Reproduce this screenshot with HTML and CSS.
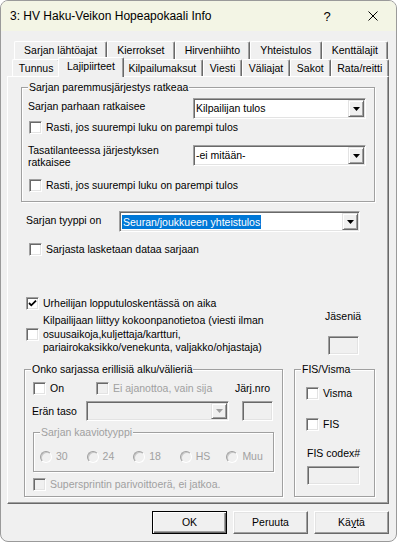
FILE: index.html
```html
<!DOCTYPE html>
<html lang="fi">
<head>
    <meta charset="UTF-8">
    <title>3: HV Haku-Veikon Hopeapokaali Info</title>
    <link rel="stylesheet" href="styles.css">
</head>
<body>
<div class="window">
    <div class="titlebar">
        <span class="title">3: HV Haku-Veikon Hopeapokaali Info</span>
        <span class="tb-btn help">?</span>
        <span class="tb-btn">
            <svg width="10" height="10" viewBox="0 0 10 10"><path d="M0.5 0.5 L9.5 9.5 M9.5 0.5 L0.5 9.5" stroke="#000" stroke-width="1" fill="none"/></svg>
        </span>
    </div>

    <div class="client">
        <!-- välilehdet -->
        <div class="tab-row back">
            <div class="tab">Sarjan lähtöajat</div>
            <div class="tab">Kierrokset</div>
            <div class="tab">Hirvenhiihto</div>
            <div class="tab">Yhteistulos</div>
            <div class="tab">Kenttälajit</div>
        </div>
        <div class="tab-row front">
            <div class="tab">Tunnus</div>
            <div class="tab active">Lajipiirteet</div>
            <div class="tab">Kilpailumaksut</div>
            <div class="tab">Viesti</div>
            <div class="tab">Väliajat</div>
            <div class="tab">Sakot</div>
            <div class="tab">Rata/reitti</div>
        </div>

        <div class="panel">
            <fieldset class="group g-rank">
                <legend>Sarjan paremmusjärjestys ratkeaa</legend>
                <div class="row r1">
                    <span class="lbl">Sarjan parhaan ratkaisee</span>
                    <div class="combo w-rank">
                        <span class="combo-text">Kilpailijan tulos</span>
                        <span class="combo-btn"><svg width="7" height="4" viewBox="0 0 7 4"><path d="M0 0 H7 L3.5 4 Z" fill="#000"/></svg></span>
                    </div>
                </div>
                <div class="check c-rank1"><span class="box"></span><span>Rasti, jos suurempi luku on parempi tulos</span></div>
                <div class="row r2">
                    <span class="lbl two">Tasatilanteessa järjestyksen<br>ratkaisee</span>
                    <div class="combo w-rank">
                        <span class="combo-text">-ei mitään-</span>
                        <span class="combo-btn"><svg width="7" height="4" viewBox="0 0 7 4"><path d="M0 0 H7 L3.5 4 Z" fill="#000"/></svg></span>
                    </div>
                </div>
                <div class="check c-rank2"><span class="box"></span><span>Rasti, jos suurempi luku on parempi tulos</span></div>
            </fieldset>

            <div class="row r-type">
                <span class="lbl">Sarjan tyyppi on</span>
                <div class="combo w-type">
                    <span class="combo-text"><span class="sel">Seuran/joukkueen yhteistulos</span></span>
                    <span class="combo-btn"><svg width="7" height="4" viewBox="0 0 7 4"><path d="M0 0 H7 L3.5 4 Z" fill="#000"/></svg></span>
                </div>
            </div>
            <div class="check c-data"><span class="box"></span><span>Sarjasta lasketaan dataa sarjaan</span></div>

            <div class="check c-time">
                <span class="box"><svg width="11" height="11" viewBox="0 0 11 11"><path d="M2 5 L4.3 7.3 L9 2.6" stroke="#000" stroke-width="1.8" fill="none"/></svg></span>
                <span>Urheilijan lopputuloskentässä on aika</span>
            </div>

            <div class="row r-team">
                <div class="check multi">
                    <span class="box"></span>
                    <span>Kilpailijaan liittyy kokoonpanotietoa (viesti ilman<br>osuusaikoja,kuljettaja/kartturi,<br>pariairokaksikko/venekunta, valjakko/ohjastaja)</span>
                </div>
                <div class="members">
                    <span>Jäseniä</span>
                    <span class="textbox w-members"></span>
                </div>
            </div>

            <div class="row r-bottom">
                <fieldset class="group g-heats">
                    <legend>Onko sarjassa erillisiä alku/välieriä</legend>
                    <div class="row r-on">
                        <div class="check c-on"><span class="box"></span><span>On</span></div>
                        <div class="check c-notime disabled"><span class="box"></span><span>Ei ajanottoa, vain sija</span></div>
                        <span>Järj.nro</span>
                    </div>
                    <div class="row r-level">
                        <span class="lbl">Erän taso</span>
                        <div class="combo w-level disabled">
                            <span class="combo-text"></span>
                            <span class="combo-btn"><svg width="7" height="4" viewBox="0 0 7 4"><path d="M0 0 H7 L3.5 4 Z" fill="#a0a0a0"/></svg></span>
                        </div>
                        <span class="textbox w-order"></span>
                    </div>
                    <fieldset class="group g-chart disabled">
                        <legend>Sarjan kaaviotyyppi</legend>
                        <div class="radios">
                            <div class="radio"><span class="dot"></span><span>30</span></div>
                            <div class="radio"><span class="dot"></span><span>24</span></div>
                            <div class="radio"><span class="dot"></span><span>18</span></div>
                            <div class="radio"><span class="dot"></span><span>HS</span></div>
                            <div class="radio"><span class="dot"></span><span>Muu</span></div>
                        </div>
                    </fieldset>
                    <div class="check c-sprint disabled"><span class="box"></span><span>Supersprintin parivoittoerä, ei jatkoa.</span></div>
                </fieldset>

                <fieldset class="group g-fis">
                    <legend>FIS/Visma</legend>
                    <div class="check c-visma"><span class="box"></span><span>Visma</span></div>
                    <div class="check c-fis"><span class="box"></span><span>FIS</span></div>
                    <div class="codex-lbl">FIS codex#</div>
                    <span class="textbox w-codex"></span>
                </fieldset>
            </div>
        </div>

        <div class="buttons">
            <div class="btn default">OK</div>
            <div class="btn">Peruuta</div>
            <div class="btn">Kä<u>y</u>tä</div>
        </div>
    </div>
</div>
</body>
</html>
```

FILE: styles.css
```css
* {
    box-sizing: border-box;
}

body {
    margin: 0;
    background: #ffffff;
    font-family: "Liberation Sans", Arial, sans-serif;
    font-size: 10.5px;
    line-height: 13px;
    color: #000;
}

.window {
    width: 397px;
    height: 542px;
    border: 1px solid #9a9a9a;
    border-radius: 8px;
    overflow: hidden;
    background: #f0f0f0;
}

/* Otsikkopalkki */
.titlebar {
    display: flex;
    align-items: center;
    height: 30px;
    background: #f3f5e5;
}

.title {
    flex: 1;
    padding-left: 9px;
    font-size: 12px;
}

.tb-btn {
    width: 46px;
    height: 30px;
    display: flex;
    align-items: center;
    justify-content: center;
}

.tb-btn.help {
    font-size: 13px;
}

.client {
    padding: 10px 7px 0 6px;
}

/* Välilehdet */
.tab-row {
    display: flex;
}

.tab-row.back {
    margin: 0 1px 0 7px;
}

.tab-row.front {
    margin: 0 0 0 5px;
}

.tab {
    flex: 1 1 auto;
    height: 18px;
    padding: 0 4px;
    display: flex;
    align-items: center;
    justify-content: center;
    white-space: nowrap;
    background: #f0f0f0;
    border-top: 1px solid #fff;
    border-left: 1px solid #fff;
    border-right: 1px solid #696969;
    box-shadow: inset -1px 0 0 #a0a0a0;
    border-radius: 2px 2px 0 0;
}

.front .tab {
    height: 17px;
}

.front .tab.active {
    position: relative;
    z-index: 1;
    height: 20px;
    margin: -2px -2px -1px;
    padding: 0 6px 2px;
}

.panel {
    height: 428px;
    border: 1px solid;
    border-color: #fff #696969 #696969 #fff;
    box-shadow: inset -1px -1px 0 #a0a0a0;
    padding: 0 13px;
    display: flex;
    flex-direction: column;
    align-items: flex-start;
}

/* Ryhmät */
.group {
    margin: 0;
    padding: 0;
    min-width: 0;
    border: 1px solid #a0a0a0;
    box-shadow: 1px 1px 0 #fff, inset 1px 1px 0 #fff;
}

.group legend {
    margin-left: 6px;
    padding: 0 1px;
    background: #f0f0f0;
    line-height: 13px;
}

.row {
    display: flex;
}

.lbl {
    flex: none;
}

.check {
    display: flex;
    align-items: center;
    gap: 4px;
    white-space: nowrap;
}

.box {
    flex: none;
    width: 13px;
    height: 13px;
    border: 1px solid;
    border-color: #a0a0a0 #fff #fff #a0a0a0;
    box-shadow: inset 1px 1px 0 #696969, inset -1px -1px 0 #e3e3e3;
    background: #fff;
    display: flex;
    align-items: center;
    justify-content: center;
}

.disabled {
    color: #a0a0a0;
}

.disabled .box {
    background: #f0f0f0;
}

.combo {
    flex: none;
    display: flex;
    height: 21px;
    border: 1px solid;
    border-color: #a0a0a0 #fff #fff #a0a0a0;
    box-shadow: inset 1px 1px 0 #696969, inset -1px -1px 0 #e3e3e3;
    padding: 1px;
    background: #fff;
}

.combo.disabled {
    background: #f0f0f0;
}

.combo-text {
    flex: 1;
    display: flex;
    align-items: center;
    padding-left: 1px;
    white-space: nowrap;
}

.sel {
    background: #0078d7;
    color: #fff;
    padding: 0 1px;
    line-height: 14px;
}

.combo-btn {
    width: 16px;
    display: flex;
    align-items: center;
    justify-content: center;
    background: #f0f0f0;
    border: 1px solid;
    border-color: #e3e3e3 #696969 #696969 #e3e3e3;
    box-shadow: inset 1px 1px 0 #fff, inset -1px -1px 0 #a0a0a0;
}

.textbox {
    display: block;
    height: 19px;
    border: 1px solid;
    border-color: #a0a0a0 #fff #fff #a0a0a0;
    box-shadow: inset 1px 1px 0 #696969, inset -1px -1px 0 #e3e3e3;
    background: #f0f0f0;
}

/* Paremmusjärjestys */
.g-rank {
    width: 354px;
    margin-top: 4px;
    padding-bottom: 9px;
}

.g-rank .row {
    margin-left: 6px;
}

.g-rank .lbl {
    width: 165px;
    padding-top: 2px;
}

.w-rank {
    width: 173px;
}

.r1 {
    margin-top: 4px;
}

.r2 {
    margin-top: 10px;
}

.g-rank .lbl.two {
    padding-top: 0;
    line-height: 12px;
}

.r2 .combo {
    margin-top: 1px;
}

.c-rank1 {
    margin: 2px 0 0 7px;
}

.c-rank2 {
    margin: 11px 0 0 7px;
}

/* Sarjan tyyppi */
.r-type {
    margin: 9px 0 0 5px;
}

.r-type .lbl {
    width: 93px;
    padding-top: 3px;
}

.w-type {
    width: 241px;
}

.c-data {
    margin: 11px 0 0 8px;
}

.c-time {
    margin: 41px 0 0 5px;
}

.r-team {
    width: 353px;
}

.check.multi {
    margin: 4px 0 0 5px;
    line-height: 13.5px;
    align-items: center;
}

.members {
    margin: 0 11px 0 auto;
    width: 38px;
    display: flex;
    flex-direction: column;
}

.w-members {
    width: 31px;
    margin: 13px 0 0 3px;
}

/* Alaryhmät */
.r-bottom {
    margin-top: 8px;
    align-items: stretch;
}

.g-heats {
    width: 259px;
    margin-left: 3px;
    padding-bottom: 5px;
}

.r-on {
    margin: 6px 0 0 8px;
    align-items: center;
}

.c-on {
    width: 63px;
}

.c-notime {
    width: 139px;
}

.r-level {
    margin: 6px 0 0 7px;
    align-items: center;
}

.r-level .lbl {
    width: 54px;
}

.w-level {
    width: 143px;
    height: 20px;
}

.w-order {
    width: 31px;
    height: 20px;
    margin-left: 13px;
}

.g-chart {
    width: 241px;
    margin: 5px 0 0 8px;
    padding-bottom: 8px;
}

.radios {
    display: flex;
    margin: 11px 0 0 6px;
}

.radio {
    width: 47px;
    display: flex;
    align-items: center;
    gap: 4px;
}

.dot {
    width: 12px;
    height: 12px;
    border-radius: 50%;
    border: 1px solid;
    border-color: #a0a0a0 #fff #fff #a0a0a0;
    box-shadow: inset 1px 1px 0 #c8c8c8;
    background: #f0f0f0;
}

.c-sprint {
    margin: 6px 0 0 8px;
}

.g-fis {
    width: 81px;
    margin-left: 11px;
}

.c-visma {
    margin: 11px 0 0 11px;
}

.c-fis {
    margin: 18px 0 0 11px;
}

.codex-lbl {
    margin: 16px 0 0 12px;
}

.w-codex {
    width: 53px;
    margin: 6px 0 0 12px;
}

/* Painikkeet */
.buttons {
    display: flex;
    justify-content: flex-end;
    gap: 6px;
    margin-top: 7px;
}

.btn {
    width: 75px;
    height: 23px;
    display: flex;
    align-items: center;
    justify-content: center;
    border: 1px solid;
    border-color: #fff #696969 #696969 #fff;
    box-shadow: inset -1px -1px 0 #a0a0a0, inset 1px 1px 0 #e3e3e3;
    background: #f0f0f0;
}

.btn.default {
    border-color: #000;
    box-shadow: inset 1px 1px 0 #fff, inset -1px -1px 0 #696969, inset -2px -2px 0 #a0a0a0;
}
```
